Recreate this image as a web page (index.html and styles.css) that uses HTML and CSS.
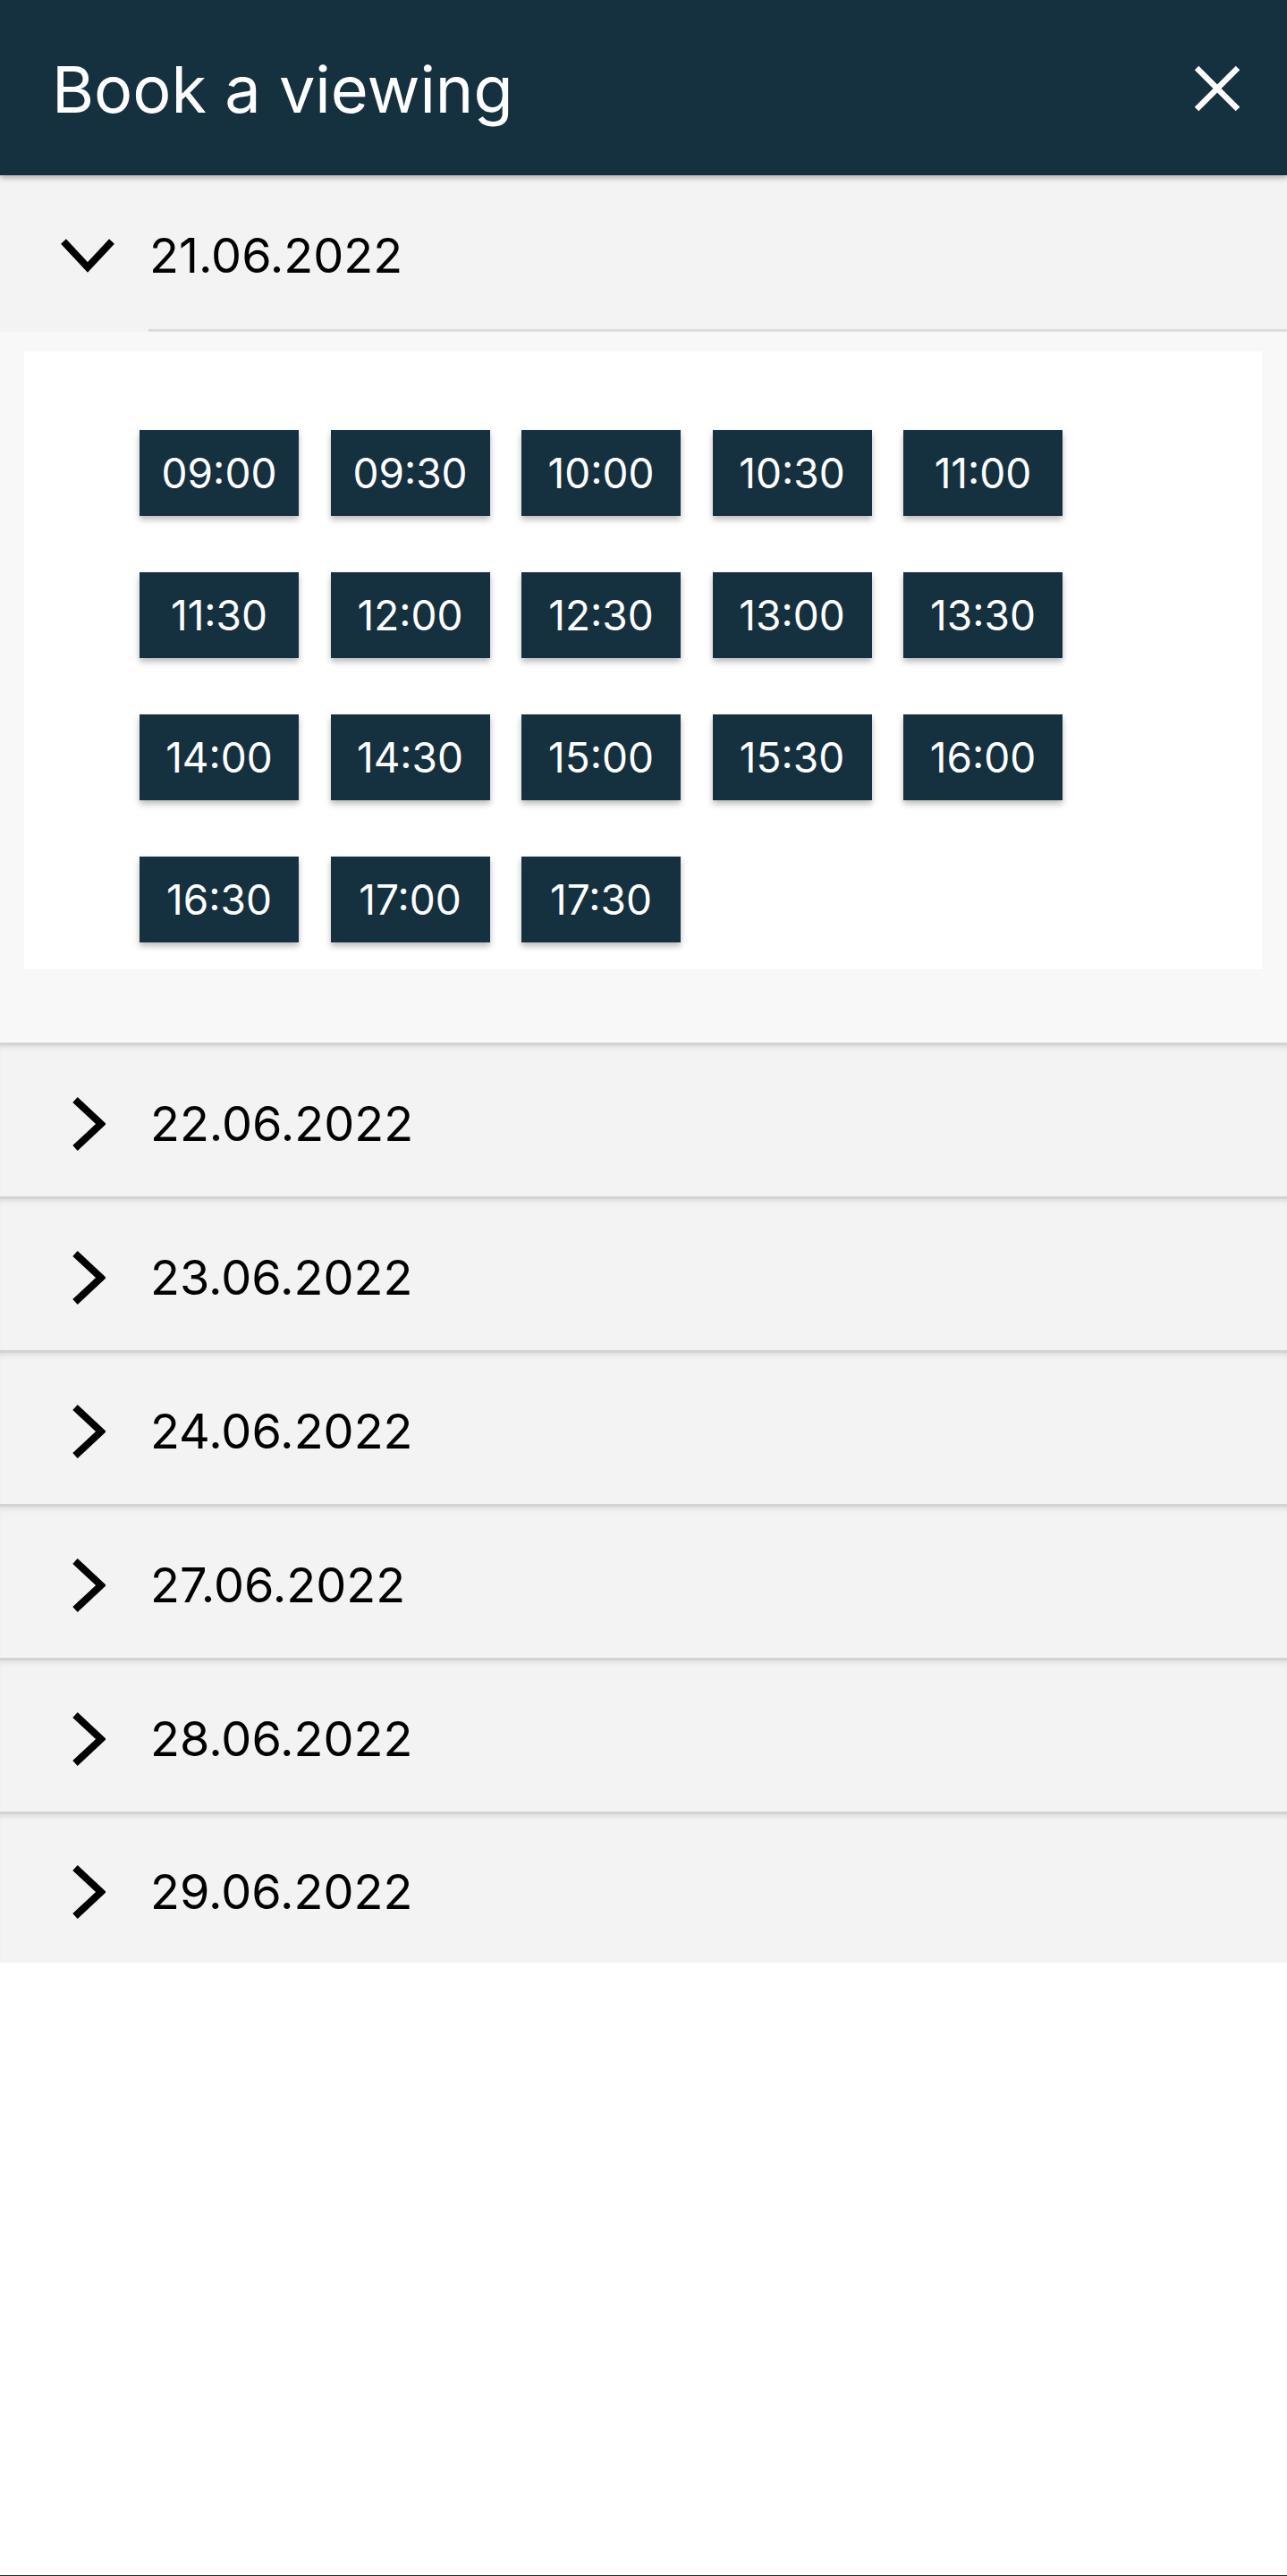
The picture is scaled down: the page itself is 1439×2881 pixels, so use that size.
FILE: index.html
```html
<!DOCTYPE html>
<html lang="en">
<head>
<meta charset="utf-8">
<title>Book a viewing</title>
<link rel="stylesheet" href="styles.css">
</head>
<body>
<div class="page">
  <header class="topbar">
    <h1 class="title">Book a viewing</h1>
    <button class="close" aria-label="Close">
      <svg viewBox="0 0 52 52" width="52" height="52"><path d="M3 3 L49 49 M49 3 L3 49" stroke="#fff" stroke-width="6.5" fill="none"/></svg>
    </button>
  </header>

  <section class="panel open">
    <div class="panel-head">
      <span class="chev"><svg viewBox="0 0 60 38" width="60" height="38"><path d="M3 3 L30 32 L57 3" stroke="#000" stroke-width="8" fill="none"/></svg></span>
      <span class="label">21.06.2022</span>
    </div>
    <div class="panel-body">
      <div class="card">
        <div class="slots">
          <button class="slot">09:00</button>
          <button class="slot">09:30</button>
          <button class="slot">10:00</button>
          <button class="slot">10:30</button>
          <button class="slot">11:00</button>
          <button class="slot">11:30</button>
          <button class="slot">12:00</button>
          <button class="slot">12:30</button>
          <button class="slot">13:00</button>
          <button class="slot">13:30</button>
          <button class="slot">14:00</button>
          <button class="slot">14:30</button>
          <button class="slot">15:00</button>
          <button class="slot">15:30</button>
          <button class="slot">16:00</button>
          <button class="slot">16:30</button>
          <button class="slot">17:00</button>
          <button class="slot">17:30</button>
        </div>
      </div>
    </div>
  </section>

  <section class="panel closed"><div class="panel-head"><span class="chev"><svg viewBox="0 0 38 60" width="38" height="60"><path d="M4 3 L33 30 L4 57" stroke="#000" stroke-width="8" fill="none"/></svg></span><span class="label">22.06.2022</span></div></section>
  <section class="panel closed"><div class="panel-head"><span class="chev"><svg viewBox="0 0 38 60" width="38" height="60"><path d="M4 3 L33 30 L4 57" stroke="#000" stroke-width="8" fill="none"/></svg></span><span class="label">23.06.2022</span></div></section>
  <section class="panel closed"><div class="panel-head"><span class="chev"><svg viewBox="0 0 38 60" width="38" height="60"><path d="M4 3 L33 30 L4 57" stroke="#000" stroke-width="8" fill="none"/></svg></span><span class="label">24.06.2022</span></div></section>
  <section class="panel closed"><div class="panel-head"><span class="chev"><svg viewBox="0 0 38 60" width="38" height="60"><path d="M4 3 L33 30 L4 57" stroke="#000" stroke-width="8" fill="none"/></svg></span><span class="label">27.06.2022</span></div></section>
  <section class="panel closed"><div class="panel-head"><span class="chev"><svg viewBox="0 0 38 60" width="38" height="60"><path d="M4 3 L33 30 L4 57" stroke="#000" stroke-width="8" fill="none"/></svg></span><span class="label">28.06.2022</span></div></section>
  <section class="panel closed"><div class="panel-head"><span class="chev"><svg viewBox="0 0 38 60" width="38" height="60"><path d="M4 3 L33 30 L4 57" stroke="#000" stroke-width="8" fill="none"/></svg></span><span class="label">29.06.2022</span></div></section>
</div>
</body>
</html>
```

FILE: styles.css
```css
html, body {
  margin: 0;
  padding: 0;
  background: #ffffff;
}

body {
  font-family: Inter, "Noto Sans", "Liberation Sans", sans-serif;
  color: #000;
}

.page {
  min-height: 100vh;
  box-sizing: border-box;
  border-bottom: 1px solid #15303f;
}

.topbar {
  position: relative;
  z-index: 2;
  height: 196px;
  background: #15303f;
  display: flex;
  align-items: center;
  justify-content: space-between;
  padding: 0 52px 0 58px;
  box-shadow: 0 3px 6px rgba(0, 0, 0, 0.28);
}

.title {
  margin: 0;
  color: #fff;
  font-weight: 400;
  font-size: 72px;
  line-height: 1;
  padding-top: 4px;
}

.close {
  background: none;
  border: 0;
  padding: 0;
  width: 52px;
  height: 52px;
  display: flex;
  margin-top: 2px;
}

.panel {
  background: #f3f3f3;
}

.panel-head {
  display: flex;
  align-items: stretch;
  box-sizing: border-box;
}

.chev {
  width: 60px;
  margin-left: 68px;
  margin-right: 38px;
  display: flex;
  align-items: center;
  justify-content: center;
}

.label {
  flex: 1;
  display: flex;
  align-items: center;
  font-size: 54px;
  line-height: 1;
  padding-left: 2px;
}

.panel.open .panel-head {
  height: 175px;
  padding-top: 8px;
}

.panel.open .label {
  border-bottom: 3px solid #dcdcdc;
  padding-left: 1px;
}

.panel.open .chev {
  margin-bottom: 3px;
}

.panel-body {
  background: #f8f8f8;
  padding: 22px 28px 82px 27px;
}

.card {
  background: #fff;
  padding: 88px 0 30px 129px;
}

.slots {
  display: grid;
  grid-template-columns: repeat(5, 178px);
  grid-auto-rows: 96px;
  column-gap: 35.5px;
  row-gap: 63px;
}

.slot {
  border: 0;
  margin: 0;
  padding: 0;
  background: #15303f;
  color: #fff;
  font-family: Inter, "Noto Sans", "Liberation Sans", sans-serif;
  font-size: 46px;
  font-weight: 400;
  box-shadow: 0 4px 7px rgba(0, 0, 0, 0.28);
}

.panel.closed {
  border-top: 3px solid #d3d3d3;
  box-shadow: inset 0 6px 6px -4px rgba(0, 0, 0, 0.10);
}

.panel.closed .panel-head {
  height: 169px;
  padding-top: 7px;
}

.panel.closed:last-child .panel-head {
  height: 166px;
}

.panel.closed .chev svg {
  margin-left: 2px;
}
```
